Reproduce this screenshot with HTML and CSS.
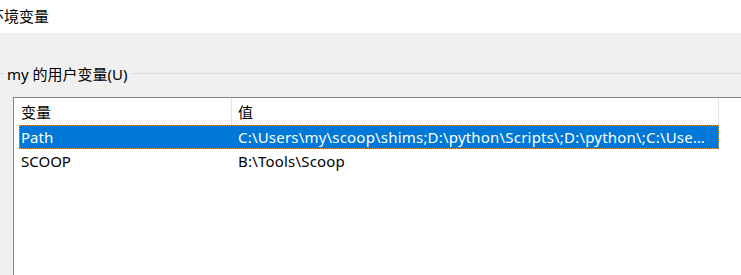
FILE: index.html
```html
<!DOCTYPE html>
<html>
<head>
    <title>环境变量</title>
    <meta name="viewport" content="width=device-width, initial-scale=1">
    <link rel="stylesheet" href="styles.css">
</head>
<body>
    <header class="titlebar">
        <span class="title">环境变量</span>
    </header>
    <main class="panel">
        <div class="group-title">
            <span>my 的用户变量(U)</span>
        </div>
        <div class="listbox">
            <div class="list-header">
                <div class="col col-name">变量</div>
                <div class="col col-value">值</div>
            </div>
            <div class="list-row selected">
                <div class="cell cell-name">Path</div>
                <div class="cell cell-value">C:\Users\my\scoop\shims;D:\python\Scripts\;D:\python\;C:\Users\my\AppData\Local\Microsoft\WindowsApps;</div>
            </div>
            <div class="list-row">
                <div class="cell cell-name">SCOOP</div>
                <div class="cell cell-value">B:\Tools\Scoop</div>
            </div>
        </div>
    </main>
</body>
</html>
```

FILE: styles.css
```css
html, body {
    margin: 0;
    height: 100%;
    overflow: hidden;
}

body {
    background-color: #F0F0F0;
    font-family: "Noto Sans", "Noto Sans CJK SC", sans-serif;
    font-size: 15px;
    color: #000;
    display: flex;
    flex-direction: column;
}

.titlebar {
    background-color: #fff;
    height: 33px;
    display: flex;
    align-items: center;
    flex-shrink: 0;
}

.title {
    margin-left: -11px;
    font-size: 15px;
    padding-bottom: 2px;
}

.panel {
    flex-grow: 1;
    display: flex;
    flex-direction: column;
    padding-top: 30px;
}

.group-title {
    display: flex;
    align-items: center;
    height: 20px;
    gap: 2px;
}

.group-title::before,
.group-title::after {
    content: "";
    height: 1px;
    background-color: #DCDCDC;
}

.group-title::before {
    width: 5px;
}

.group-title::after {
    flex-grow: 1;
    margin-left: 1px;
}

.listbox {
    margin-top: 14px;
    margin-left: 13px;
    margin-right: -10px;
    flex-grow: 1;
    background-color: #fff;
    border-top: 1px solid #828790;
    border-left: 1px solid #828790;
}

.list-header {
    display: flex;
    height: 27px;
}

.col {
    display: flex;
    align-items: center;
    padding-left: 7px;
    border-right: 1px solid #E5E5E5;
    box-sizing: border-box;
}

.col-name {
    width: 218px;
}

.col-value {
    width: 487px;
    padding-left: 6px;
}

.list-row {
    display: flex;
    margin-left: 5px;
    width: 700px;
    height: 24px;
    box-sizing: border-box;
    border: 1px solid transparent;
}

.list-row.selected {
    background-color: #0078D7;
    color: #fff;
    border: 1px dotted #E8973A;
}

.cell {
    display: flex;
    align-items: center;
    white-space: nowrap;
    overflow: hidden;
}

.cell-name {
    width: 212px;
    padding-left: 1px;
}

.cell-value {
    flex: 1;
    min-width: 0;
    padding-left: 5px;
    padding-right: 8px;
    display: block;
    line-height: 22px;
    letter-spacing: 0.2px;
    text-overflow: ellipsis;
}
```
